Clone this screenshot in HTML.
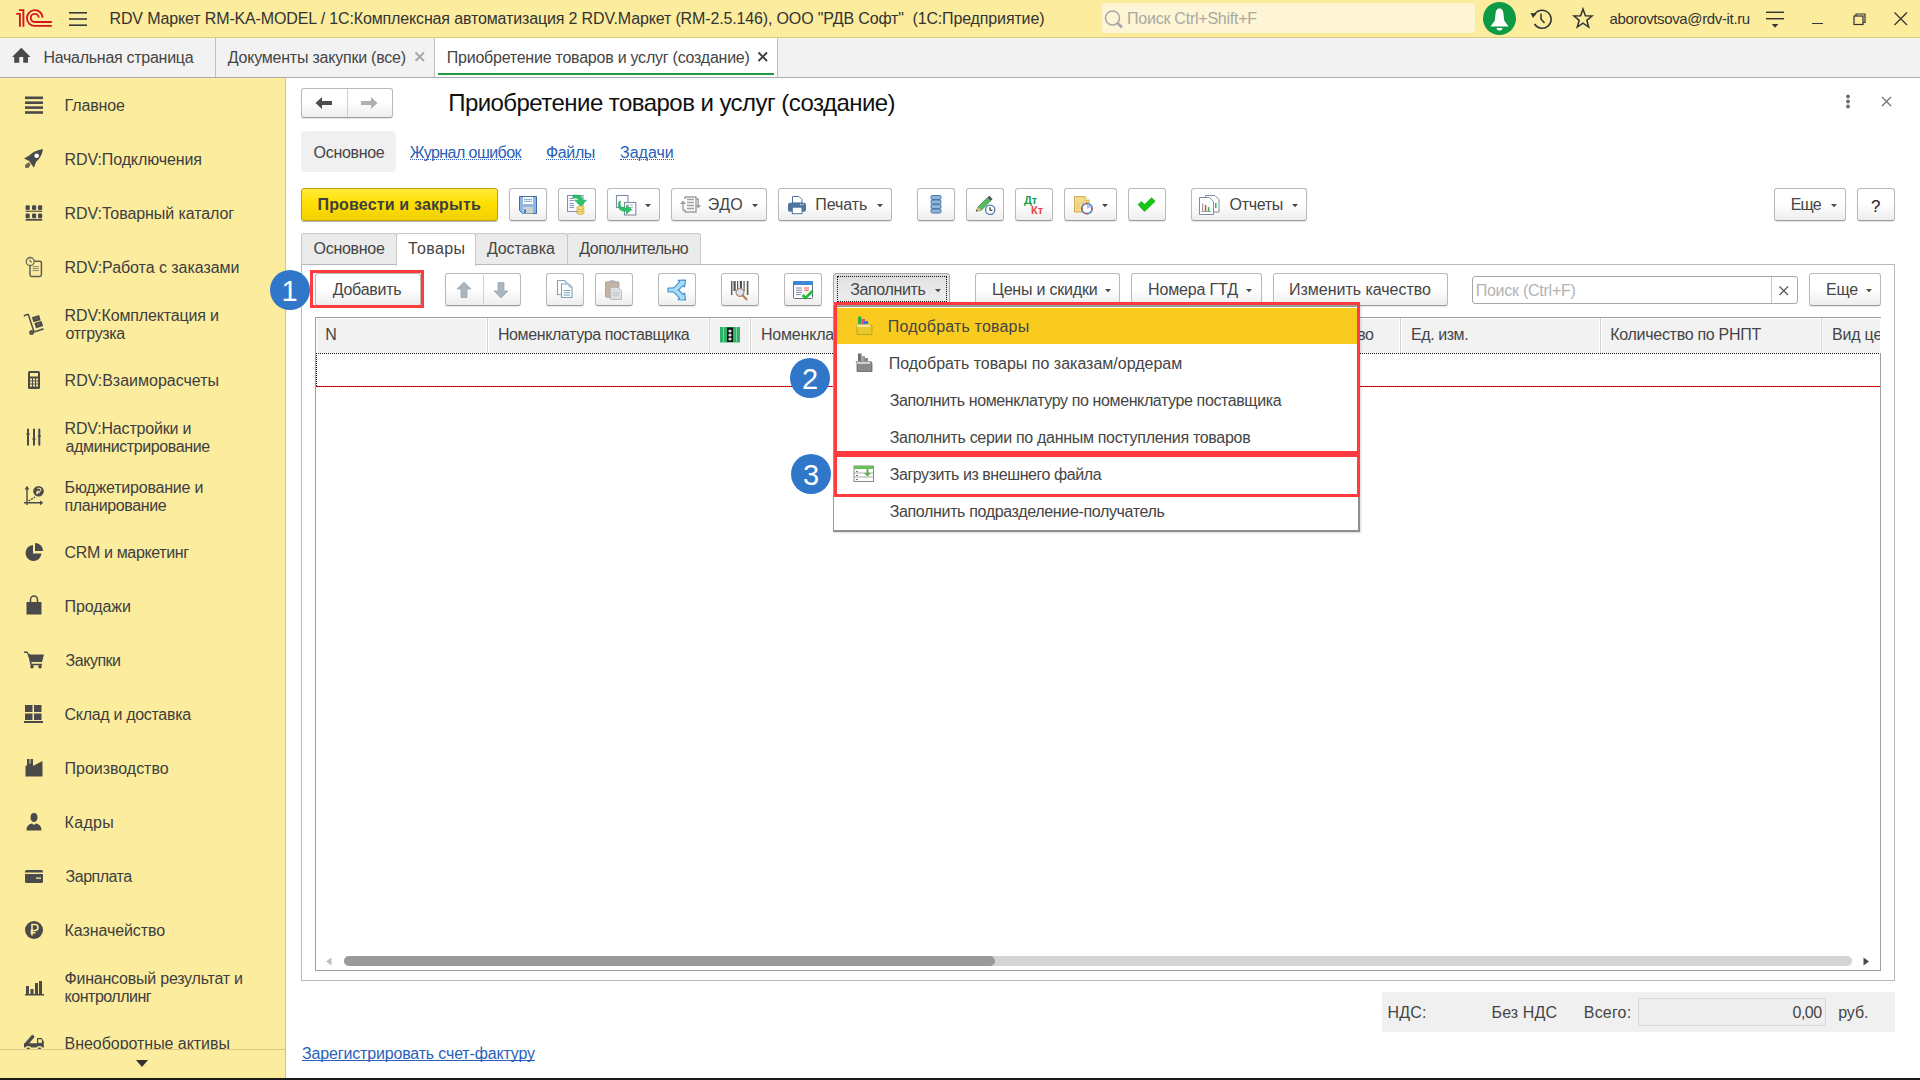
<!DOCTYPE html><html><head><meta charset="utf-8"><style>
*{box-sizing:border-box}
html,body{margin:0;padding:0}
body{width:1920px;height:1080px;overflow:hidden;position:relative;background:#fff;font-family:"Liberation Sans",sans-serif}
.a{position:absolute}
.t{position:absolute;white-space:nowrap;font-family:"Liberation Sans",sans-serif}
.btn{position:absolute;border:1px solid #B9B9B9;border-bottom-color:#9C9C9C;border-radius:3px;background:linear-gradient(#FFFFFF 0%,#FFFFFF 45%,#EEEEEE 100%);box-shadow:0 1px 1px rgba(0,0,0,0.10)}
</style></head><body>
<div class="a" style="left:0px;top:0px;width:1920px;height:37px;background:#FBEC9E"></div>
<div class="a" style="left:0px;top:37px;width:1920px;height:1px;background:#DDCB83"></div>
<svg class="a" style="left:0px;top:0px;" width="60" height="37" viewBox="0 0 60 37"><g fill="none" stroke="#D6141E" stroke-width="1.85" stroke-linecap="butt">
<path d="M16.2 13.9 H19.9 V26.7"/><path d="M19 10.1 H23.4 V26.7"/>
<path d="M42.7 17.6 A7.9 7.9 0 1 0 34.7 25.9 H51.8"/>
<path d="M38.8 17.6 A4.05 4.05 0 1 0 34.7 22 H51.8"/>
</g></svg>
<svg class="a" style="left:68px;top:11px;" width="20" height="16" viewBox="0 0 20 16"><g fill="#3A3A3A"><rect x="1" y="1" width="18" height="1.6"/><rect x="1" y="7.2" width="18" height="1.6"/><rect x="1" y="13.4" width="18" height="1.6"/></g></svg>
<div class="t" style="left:109.5px;top:11px;font-size:16px;line-height:16px;color:#333;letter-spacing:-0.143px;">RDV Маркет RM-KA-MODEL / 1С:Комплексная автоматизация 2 RDV.Маркет (RM-2.5.146), ООО "РДВ Софт"&nbsp; (1С:Предприятие)</div>
<div class="a" style="left:1102px;top:3px;width:373px;height:30px;background:#FDF5D3;border-radius:3px"></div>
<svg class="a" style="left:1102px;top:8px;" width="24" height="22" viewBox="0 0 24 22"><g fill="none" stroke="#A8A8A8" stroke-width="1.6"><circle cx="10.5" cy="10" r="7"/></g><path d="M15.5 15 L20 19.5" stroke="#A8A8A8" stroke-width="2.6"/></svg>
<div class="t" style="left:1127px;top:11px;font-size:16px;line-height:16px;color:#A9A9A3;letter-spacing:-0.235px;">Поиск Ctrl+Shift+F</div>
<svg class="a" style="left:1482px;top:2px;" width="35" height="34" viewBox="0 0 35 34"><circle cx="17.5" cy="16.5" r="16.5" fill="#0E9A45"/><path d="M17.5 6.5 C14.5 6.5 13.8 9 13.5 12 L12.8 18.5 L8.5 24.5 H26.5 L22.2 18.5 L21.5 12 C21.2 9 20.5 6.5 17.5 6.5 Z" fill="#fff"/><path d="M14.5 26 H20.5 C20 28 19 28.5 17.5 28.5 C16 28.5 15 28 14.5 26Z" fill="#fff"/></svg>
<svg class="a" style="left:1529px;top:7px;" width="24" height="24" viewBox="0 0 24 24"><g fill="none" stroke="#333" stroke-width="1.5"><path d="M5 8.5 A9 9 0 1 1 5.5 17"/><path d="M12 6.5 V12 L15.5 16"/></g><path d="M1.5 6 L7.5 6.5 L4 11 Z" fill="#333"/></svg>
<svg class="a" style="left:1571px;top:6px;" width="24" height="24" viewBox="0 0 24 24"><path d="M12 3 L14.4 9.8 L21 10 L15.8 14.3 L17.7 21 L12 17.1 L6.3 21 L8.2 14.3 L3 10 L9.6 9.8 Z" fill="none" stroke="#333" stroke-width="1.5" stroke-linejoin="miter"/></svg>
<div class="t" style="left:1609.6px;top:11px;font-size:15px;line-height:15px;color:#333;letter-spacing:-0.360px;">aborovtsova@rdv-it.ru</div>
<svg class="a" style="left:1764px;top:9px;" width="22" height="22" viewBox="0 0 22 22"><g fill="#333"><rect x="2" y="2.6" width="18" height="1.4"/><rect x="2" y="9" width="18" height="1.4"/><path d="M7.8 15 H14.3 L11 18.8 Z"/></g></svg>
<div class="a" style="left:1812px;top:23px;width:11px;height:1px;background:#333"></div>
<svg class="a" style="left:1852px;top:12px;" width="16" height="14" viewBox="0 0 16 14"><g fill="none" stroke="#333" stroke-width="1.2"><rect x="2" y="4" width="9" height="8.5"/><path d="M4 4 V2 H13 V10.5 H11"/></g></svg>
<svg class="a" style="left:1893px;top:11px;" width="16" height="16" viewBox="0 0 16 16"><path d="M1.5 1.5 L14 14 M14 1.5 L1.5 14" stroke="#333" stroke-width="1.3"/></svg>
<div class="a" style="left:0px;top:38px;width:1920px;height:39px;background:#F2F2F2"></div>
<div class="a" style="left:0px;top:77px;width:1920px;height:1px;background:#ABABAB"></div>
<div class="a" style="left:215px;top:38px;width:1px;height:39px;background:#BFBFBF"></div>
<div class="a" style="left:434px;top:38px;width:1px;height:39px;background:#BFBFBF"></div>
<div class="a" style="left:435px;top:38px;width:342px;height:39px;background:#FFFFFF"></div>
<div class="a" style="left:777px;top:38px;width:1px;height:39px;background:#BFBFBF"></div>
<div class="a" style="left:438px;top:73px;width:336px;height:2px;background:#1E9A44"></div>
<svg class="a" style="left:11px;top:47px;" width="22" height="20" viewBox="0 0 22 20"><path d="M10.3 0.8 L19.5 9.9 H17 V15.8 H12.2 V10 H8.3 V15.8 H3.2 V9.9 H1 Z" fill="#4A4A4A"/></svg>
<div class="t" style="left:43.5px;top:50px;font-size:16px;line-height:16px;color:#454545;letter-spacing:-0.279px;">Начальная страница</div>
<div class="t" style="left:227.8px;top:50px;font-size:16px;line-height:16px;color:#454545;letter-spacing:-0.227px;">Документы закупки (все)</div>
<svg class="a" style="left:413px;top:50px;" width="14" height="14" viewBox="0 0 14 14"><path d="M2.5 2.5 L11 11 M11 2.5 L2.5 11" stroke="#A6A6A6" stroke-width="1.8"/></svg>
<div class="t" style="left:446.8px;top:50px;font-size:16px;line-height:16px;color:#454545;letter-spacing:-0.238px;">Приобретение товаров и услуг (создание)</div>
<svg class="a" style="left:756px;top:50px;" width="14" height="14" viewBox="0 0 14 14"><path d="M2.5 2.5 L11 11 M11 2.5 L2.5 11" stroke="#3A3A3A" stroke-width="1.8"/></svg>
<div class="a" style="left:0px;top:78px;width:285px;height:1000px;background:#FBEC9E"></div>
<div class="a" style="left:285px;top:78px;width:1px;height:1000px;background:#D5C27E"></div>
<div class="t" style="left:64.6px;top:98px;font-size:16px;line-height:16px;color:#3E3E3E;letter-spacing:-0.133px;">Главное</div>
<div class="t" style="left:64.6px;top:152px;font-size:16px;line-height:16px;color:#3E3E3E;letter-spacing:-0.107px;">RDV:Подключения</div>
<div class="t" style="left:64.6px;top:206px;font-size:16px;line-height:16px;color:#3E3E3E;letter-spacing:-0.079px;">RDV:Товарный каталог</div>
<div class="t" style="left:64.6px;top:260px;font-size:16px;line-height:16px;color:#3E3E3E;letter-spacing:-0.045px;">RDV:Работа с заказами</div>
<div class="t" style="left:64.6px;top:308px;font-size:16px;line-height:16px;color:#3E3E3E;letter-spacing:-0.159px;">RDV:Комплектация и</div>
<div class="t" style="left:65.6px;top:326px;font-size:16px;line-height:16px;color:#3E3E3E;letter-spacing:-0.343px;">отгрузка</div>
<div class="t" style="left:64.6px;top:373px;font-size:16px;line-height:16px;color:#3E3E3E;letter-spacing:-0.006px;">RDV:Взаиморасчеты</div>
<div class="t" style="left:64.6px;top:421px;font-size:16px;line-height:16px;color:#3E3E3E;letter-spacing:-0.186px;">RDV:Настройки и</div>
<div class="t" style="left:65.6px;top:439px;font-size:16px;line-height:16px;color:#3E3E3E;letter-spacing:-0.394px;">администрирование</div>
<div class="t" style="left:64.6px;top:480px;font-size:16px;line-height:16px;color:#3E3E3E;letter-spacing:-0.200px;">Бюджетирование и</div>
<div class="t" style="left:64.6px;top:498px;font-size:16px;line-height:16px;color:#3E3E3E;letter-spacing:-0.391px;">планирование</div>
<div class="t" style="left:64.6px;top:545px;font-size:16px;line-height:16px;color:#3E3E3E;letter-spacing:-0.357px;">CRM и маркетинг</div>
<div class="t" style="left:64.6px;top:599px;font-size:16px;line-height:16px;color:#3E3E3E;letter-spacing:-0.100px;">Продажи</div>
<div class="t" style="left:65.6px;top:653px;font-size:16px;line-height:16px;color:#3E3E3E;letter-spacing:-0.483px;">Закупки</div>
<div class="t" style="left:64.6px;top:707px;font-size:16px;line-height:16px;color:#3E3E3E;letter-spacing:-0.313px;">Склад и доставка</div>
<div class="t" style="left:64.6px;top:761px;font-size:16px;line-height:16px;color:#3E3E3E;letter-spacing:-0.027px;">Производство</div>
<div class="t" style="left:64.6px;top:815px;font-size:16px;line-height:16px;color:#3E3E3E;letter-spacing:0.300px;">Кадры</div>
<div class="t" style="left:65.6px;top:869px;font-size:16px;line-height:16px;color:#3E3E3E;letter-spacing:-0.500px;">Зарплата</div>
<div class="t" style="left:64.6px;top:923px;font-size:16px;line-height:16px;color:#3E3E3E;letter-spacing:-0.091px;">Казначейство</div>
<div class="t" style="left:64.6px;top:971px;font-size:16px;line-height:16px;color:#3E3E3E;letter-spacing:-0.229px;">Финансовый результат и</div>
<div class="t" style="left:64.6px;top:989px;font-size:16px;line-height:16px;color:#3E3E3E;letter-spacing:-0.490px;">контроллинг</div>
<div class="a" style="left:0;top:1020px;width:285px;height:29px;overflow:hidden">
<div class="t" style="left:64.6px;top:16px;font-size:16px;line-height:16px;color:#3E3E3E;letter-spacing:-0.044px;">Внеоборотные активы</div>
</div>
<div class="a" style="left:0px;top:1049px;width:285px;height:1px;background:#D9C886"></div>
<svg class="a" style="left:134px;top:1058px;" width="16" height="11" viewBox="0 0 16 11"><path d="M2 2 H14 L8 9 Z" fill="#333"/></svg>
<div class="a" style="left:0px;top:1078px;width:1920px;height:2px;background:#1A1A1A"></div>
<svg class="a" style="left:24px;top:95px;" width="20" height="20" viewBox="0 0 20 20"><g fill="#4A4A4A"><rect x="1" y="1.5" width="18" height="2.6"/><rect x="1" y="6.4" width="18" height="2.6"/><rect x="1" y="11.3" width="18" height="2.6"/><rect x="1" y="16.2" width="18" height="2.6"/></g></svg>
<svg class="a" style="left:20px;top:145px;" width="26" height="26" viewBox="0 0 26 26"><path d="M22.9 4 C17.5 4.8 12.5 7.2 9.6 10.2 L4 13.4 L9.2 16 L13.9 22.7 L16 17 C19.5 14 22.4 9.5 22.9 4 Z" fill="#4A4A4A"/><circle cx="16.7" cy="10.7" r="2.3" fill="#fff"/><path d="M8.8 17.3 L5 20 L5.4 23.2 L8.7 22.8 L10.7 19.2 Z" fill="#6A6855"/></svg>
<svg class="a" style="left:25px;top:204px;" width="18" height="18" viewBox="0 0 18 18"><g fill="#4A4A4A"><rect x="0.6" y="1.3" width="4.2" height="4.6" rx="1.2"/><rect x="7" y="1.3" width="4.2" height="4.6" rx="1.2"/><rect x="13" y="1.3" width="4.2" height="4.6" rx="1.2"/><rect x="0.6" y="6.6" width="16.6" height="1.4" fill="#6A6855"/><rect x="0.6" y="9.6" width="4.2" height="4.6" rx="1.2"/><rect x="7" y="9.6" width="4.2" height="4.6" rx="1.2"/><rect x="13" y="9.6" width="4.2" height="4.6" rx="1.2"/><rect x="0.6" y="14.9" width="16.6" height="1.8"/></g></svg>
<svg class="a" style="left:25px;top:256px;" width="18" height="22" viewBox="0 0 18 22"><rect x="5" y="5.2" width="11.4" height="15.2" rx="1.6" fill="none" stroke="#5E5C50" stroke-width="1.5"/><path d="M7.6 10.6 H13.8 M7.6 12.6 H13.8 M7.6 14.6 H13.8" stroke="#8A8770" stroke-width="1"/><circle cx="5.2" cy="5.5" r="4" fill="#FBEC9E" stroke="#6A6855" stroke-width="1.3"/><path d="M5 3.3 V5.8 H7" fill="none" stroke="#6A6855" stroke-width="1"/></svg>
<svg class="a" style="left:22px;top:312px;" width="24" height="24" viewBox="0 0 24 24"><path d="M2.2 4.5 C2.5 2.8 3.5 2.3 6.3 2.4 L12 19.8" fill="none" stroke="#4F4E48" stroke-width="1.5"/><circle cx="9.6" cy="20.4" r="2.5" fill="#5A5950"/><path d="M12 20 L21.5 16.8" stroke="#5A5950" stroke-width="1.8"/><g transform="rotate(-17 15 10)"><rect x="11.5" y="4" width="7.5" height="5.3" fill="#4A4A48"/><rect x="12.2" y="10.3" width="7.5" height="5.3" fill="#4A4A48"/><path d="M13.5 6.8 Q15 5.8 16.5 6.8 M14.2 13 Q15.7 12 17.2 13" stroke="#8A8770" stroke-width=".8" fill="none"/></g></svg>
<svg class="a" style="left:27px;top:370px;" width="14" height="20" viewBox="0 0 14 20"><rect x="1" y="1" width="12" height="18" rx="1.5" fill="#4A4A4A"/><rect x="3" y="3" width="8" height="3.5" fill="#FBEC9E"/><g fill="#FBEC9E"><rect x="3" y="8.5" width="2" height="2"/><rect x="6" y="8.5" width="2" height="2"/><rect x="9" y="8.5" width="2" height="2"/><rect x="3" y="11.5" width="2" height="2"/><rect x="6" y="11.5" width="2" height="2"/><rect x="9" y="11.5" width="2" height="2"/><rect x="3" y="14.5" width="2" height="2"/><rect x="6" y="14.5" width="2" height="2"/><rect x="9" y="14.5" width="2" height="2"/></g></svg>
<svg class="a" style="left:26px;top:428px;" width="17" height="19" viewBox="0 0 17 19"><g stroke="#4A4A4A" stroke-width="2" stroke-linecap="round" fill="none"><path d="M2 1.5 V4.3 M2 7.8 V16.8 M8 1.5 V9.3 M8 12.8 V16.8 M13.3 1.5 V6.3 M13.3 9.8 V16.8"/></g><g fill="#4A4A4A"><circle cx="2" cy="6" r="1.6"/><circle cx="8" cy="11" r="1.6"/><circle cx="13.3" cy="8" r="1.6"/></g></svg>
<svg class="a" style="left:23px;top:484px;" width="22" height="23" viewBox="0 0 22 23"><g fill="none" stroke="#4A4A4A" stroke-width="1.4"><path d="M4 3.5 V21 M1 18.8 H17.5"/><path d="M5.5 17 L12 13.2" stroke-dasharray="2 1"/></g><path d="M1.6 5.5 L4 1.8 L6.4 5.5Z M17 16.4 L20.3 18.8 L17 21.2Z" fill="#4A4A4A"/><circle cx="15.5" cy="7.2" r="5.3" fill="#4A4A4A"/><path d="M14.2 4.3 H16.4 A1.5 1.5 0 0 1 16.4 7.3 H14.2 V10.5 M13 8.8 H17" stroke="#FBEC9E" stroke-width="1.1" fill="none"/></svg>
<svg class="a" style="left:24px;top:542px;" width="20" height="20" viewBox="0 0 20 20"><path d="M9 3 A8 8 0 1 0 17.5 11.5 H9 Z" fill="#4A4A4A"/><path d="M11 1 A8 8 0 0 1 19 9 H11 Z" fill="#4A4A4A"/></svg>
<svg class="a" style="left:25px;top:595px;" width="18" height="21" viewBox="0 0 18 21"><path d="M1.5 7 H16.5 V19.5 H1.5 Z" fill="#4A4A4A"/><path d="M5.5 8 V4.5 A3.5 3.5 0 0 1 12.5 4.5 V8" fill="none" stroke="#4A4A4A" stroke-width="1.5"/></svg>
<svg class="a" style="left:23px;top:650px;" width="22" height="20" viewBox="0 0 22 20"><path d="M1 1.5 H4.5 L6 4.5 H21 L19 12 H7.5 L4 3 H1Z" fill="#4A4A4A"/><path d="M6 4 L8 14.5 H19" fill="none" stroke="#4A4A4A" stroke-width="1.5"/><circle cx="9" cy="16.8" r="1.8" fill="#4A4A4A"/><circle cx="17" cy="16.8" r="1.8" fill="#4A4A4A"/></svg>
<svg class="a" style="left:23px;top:704px;" width="21" height="20" viewBox="0 0 21 20"><g fill="#4A4A4A"><rect x="2" y="1" width="7.5" height="7"/><rect x="11" y="1" width="7.5" height="7"/><rect x="2" y="9.5" width="7.5" height="6.5"/><rect x="11" y="9.5" width="7.5" height="6.5"/><rect x="1" y="17" width="19" height="2"/></g></svg>
<svg class="a" style="left:24px;top:758px;" width="20" height="20" viewBox="0 0 20 20"><path d="M1.5 8 L9 4 V8 L18.5 3 V18.5 H1.5 Z" fill="#4A4A4A"/><rect x="3" y="1" width="2.5" height="6" fill="#4A4A4A"/><rect x="6.5" y="1" width="2.5" height="4.5" fill="#4A4A4A"/></svg>
<svg class="a" style="left:25px;top:812px;" width="18" height="20" viewBox="0 0 18 20"><path d="M9 1 C6.5 1 5.5 3 5.5 5.5 C5.5 8 7 10 9 10 C11 10 12.5 8 12.5 5.5 C12.5 3 11.5 1 9 1Z" fill="#4A4A4A"/><path d="M1.5 18.5 C1.5 14 4 12 7 11.5 L9 13 L11 11.5 C14 12 16.5 14 16.5 18.5 Z" fill="#4A4A4A"/></svg>
<svg class="a" style="left:24px;top:869px;" width="20" height="15" viewBox="0 0 20 15"><rect x="1" y="1" width="18" height="13" rx="1.5" fill="#4A4A4A"/><rect x="1" y="3.5" width="18" height="1.5" fill="#FBEC9E"/><rect x="12" y="8.5" width="5" height="1.3" fill="#FBEC9E"/></svg>
<svg class="a" style="left:24px;top:920px;" width="20" height="20" viewBox="0 0 20 20"><circle cx="10" cy="10" r="9" fill="#4A4A4A"/><path d="M8 15.5 V4.5 H11 A3 3 0 0 1 11 10.5 H6.5 M6.5 12.8 H11.5" fill="none" stroke="#FBEC9E" stroke-width="1.6"/></svg>
<svg class="a" style="left:24px;top:980px;" width="20" height="16" viewBox="0 0 20 16"><g fill="#4A4A4A"><rect x="2" y="6" width="3" height="8"/><rect x="6.5" y="9" width="3" height="5"/><rect x="11" y="3" width="3" height="11"/><rect x="15" y="1" width="3" height="13"/><rect x="1" y="14" width="19" height="1.5"/></g></svg>
<div class="a" style="left:22px;top:1033px;width:24px;height:16px;overflow:hidden">
<svg class="a" style="left:0px;top:0px;" width="24" height="20" viewBox="0 0 24 20"><path d="M2.3 11 L10.2 1.6 L12.8 3.8 L5.5 12.2 Z" fill="#4A4A4A"/><path d="M3.2 9.3 L9.8 2.6" stroke="#8A8770" stroke-width=".7" stroke-dasharray="1 1"/><path d="M2 10.3 H15 V5.6 Q15 5 15.6 5 H19.8 L21.8 8.5 V14.5 H2 Z" fill="#4A4A4A"/><rect x="16.2" y="6.3" width="3.6" height="3.6" fill="#FBEC9E"/><circle cx="6.3" cy="16.3" r="3.2" fill="#FBEC9E"/><circle cx="17.5" cy="16.3" r="3.2" fill="#FBEC9E"/><circle cx="6.3" cy="16.3" r="1.7" fill="#4A4A4A"/><circle cx="17.5" cy="16.3" r="1.7" fill="#4A4A4A"/></svg>
</div>
<div class="btn" style="left:301px;top:88px;width:92px;height:30px;"></div>
<div class="a" style="left:347px;top:89px;width:1px;height:28px;background:#CFCFCF"></div>
<svg class="a" style="left:314px;top:95px;" width="20" height="16" viewBox="0 0 20 16"><path d="M1.5 8 L8 2 V6 H18 V10 H8 V14 Z" fill="#4D4D4D"/></svg>
<svg class="a" style="left:359px;top:95px;" width="20" height="16" viewBox="0 0 20 16"><path d="M18.5 8 L12 2 V6 H2 V10 H12 V14 Z" fill="#AFAFAF"/></svg>
<div class="t" style="left:448.2px;top:91px;font-size:24px;line-height:24px;color:#111111;letter-spacing:-0.547px;">Приобретение товаров и услуг (создание)</div>
<svg class="a" style="left:1843px;top:94px;" width="10" height="16" viewBox="0 0 10 16"><g fill="#6E6E6E"><circle cx="5" cy="2.5" r="1.9"/><circle cx="5" cy="7.5" r="1.9"/><circle cx="5" cy="12.5" r="1.9"/></g></svg>
<svg class="a" style="left:1880px;top:95px;" width="13" height="13" viewBox="0 0 13 13"><path d="M2 2 L11 11 M11 2 L2 11" stroke="#6E6E6E" stroke-width="1.2"/></svg>
<div class="a" style="left:301px;top:131px;width:95px;height:41px;background:#F0F0F0;border-radius:4px"></div>
<div class="t" style="left:313.6px;top:145px;font-size:16px;line-height:16px;color:#454545;letter-spacing:-0.314px;">Основное</div>
<div class="t" style="left:409.7px;top:145px;font-size:16px;line-height:16px;color:#2B5FB8;letter-spacing:-0.558px;border-bottom:1px dotted #2B5FB8;height:15px">Журнал ошибок</div>
<div class="t" style="left:546px;top:145px;font-size:16px;line-height:16px;color:#2B5FB8;letter-spacing:-0.375px;border-bottom:1px dotted #2B5FB8;height:15px">Файлы</div>
<div class="t" style="left:620px;top:145px;font-size:16px;line-height:16px;color:#2B5FB8;letter-spacing:0.000px;border-bottom:1px dotted #2B5FB8;height:15px">Задачи</div>
<div class="a" style="left:301px;top:188px;width:197px;height:33px;border:1px solid #C2A000;border-radius:3px;background:linear-gradient(#FFEB3B 0%,#FFE000 45%,#F1D000 100%);box-shadow:0 1px 1px rgba(0,0,0,0.3)"></div>
<div class="t" style="left:317.5px;top:197px;font-size:16px;line-height:16px;color:#3F3F3F;font-weight:bold;letter-spacing:0.165px;">Провести и закрыть</div>
<div class="btn" style="left:509px;top:188px;width:38px;height:33px;"></div>
<div class="btn" style="left:558px;top:188px;width:38px;height:33px;"></div>
<div class="btn" style="left:607px;top:188px;width:53px;height:33px;"></div>
<div class="btn" style="left:671px;top:188px;width:96px;height:33px;"></div>
<div class="btn" style="left:778px;top:188px;width:114px;height:33px;"></div>
<div class="btn" style="left:917px;top:188px;width:38px;height:33px;"></div>
<div class="btn" style="left:966px;top:188px;width:38px;height:33px;"></div>
<div class="btn" style="left:1015px;top:188px;width:38px;height:33px;"></div>
<div class="btn" style="left:1064px;top:188px;width:53px;height:33px;"></div>
<div class="btn" style="left:1128px;top:188px;width:38px;height:33px;"></div>
<div class="btn" style="left:1191px;top:188px;width:116px;height:33px;"></div>
<div class="btn" style="left:1774px;top:188px;width:72px;height:33px;"></div>
<div class="btn" style="left:1857px;top:188px;width:38px;height:33px;"></div>
<svg class="a" style="left:645px;top:204px;" width="7" height="4" viewBox="0 0 7 4"><path d="M0 0 H6 L3 3.2 Z" fill="#4A4A4A"/></svg>
<svg class="a" style="left:752px;top:204px;" width="7" height="4" viewBox="0 0 7 4"><path d="M0 0 H6 L3 3.2 Z" fill="#4A4A4A"/></svg>
<svg class="a" style="left:877px;top:204px;" width="7" height="4" viewBox="0 0 7 4"><path d="M0 0 H6 L3 3.2 Z" fill="#4A4A4A"/></svg>
<svg class="a" style="left:1102px;top:204px;" width="7" height="4" viewBox="0 0 7 4"><path d="M0 0 H6 L3 3.2 Z" fill="#4A4A4A"/></svg>
<svg class="a" style="left:1292px;top:204px;" width="7" height="4" viewBox="0 0 7 4"><path d="M0 0 H6 L3 3.2 Z" fill="#4A4A4A"/></svg>
<svg class="a" style="left:1831px;top:204px;" width="7" height="4" viewBox="0 0 7 4"><path d="M0 0 H6 L3 3.2 Z" fill="#4A4A4A"/></svg>
<div class="t" style="left:707.8px;top:197px;font-size:16px;line-height:16px;color:#454545;letter-spacing:0.375px;">ЭДО</div>
<div class="t" style="left:815.2px;top:197px;font-size:16px;line-height:16px;color:#454545;letter-spacing:-0.050px;">Печать</div>
<div class="t" style="left:1229.5px;top:197px;font-size:16px;line-height:16px;color:#454545;letter-spacing:-0.300px;">Отчеты</div>
<div class="t" style="left:1790.7px;top:197px;font-size:16px;line-height:16px;color:#454545;letter-spacing:-0.850px;">Еще</div>
<div class="t" style="left:1871px;top:198px;font-size:17px;line-height:17px;color:#222;letter-spacing:0.700px;">?</div>
<svg class="a" style="left:519px;top:196px;" width="18" height="18" viewBox="0 0 18 18"><path d="M0.5 0.5 H17.5 V17.5 H3.5 L0.5 14.5 Z" fill="#8FB6E3" stroke="#3B6FA8" stroke-width="1"/><rect x="4" y="1" width="10" height="7" fill="#fff"/><path d="M5 3.3 H13 M5 5.3 H13" stroke="#7FA3CC" stroke-width="1"/><rect x="4" y="11" width="10" height="6.5" fill="#CDD2CE"/><rect x="5" y="13.5" width="2" height="3.5" fill="#3B78C0"/></svg>
<svg class="a" style="left:566px;top:194px;" width="22" height="22" viewBox="0 0 22 22"><rect x="1.5" y="1.5" width="15.5" height="16" fill="#F6F8FB" stroke="#8090A8" stroke-width="1"/><path d="M3.5 4.5 H7 M3.5 6.5 H8 M3.5 9.5 H7.5 M3.5 11.5 H8 M3.5 13.5 H8" stroke="#6F8FBF" stroke-width=".9"/><path d="M7 1.2 C12.5 0.5 16.5 2 16.3 6.2 L20.5 6.2 L14.6 12.2 L8.8 6.2 L12.6 6.2 C12.6 4.6 11 3.6 7 4.2 Z" fill="#27C46A" stroke="#1E9E50" stroke-width=".6"/><g fill="#F3DE7A" stroke="#C9A93A" stroke-width=".7"><ellipse cx="14.5" cy="18.8" rx="3.8" ry="1.7"/><ellipse cx="14.5" cy="16.3" rx="3.8" ry="1.7"/><ellipse cx="14.5" cy="13.8" rx="3.8" ry="1.7"/></g></svg>
<svg class="a" style="left:615px;top:194px;" width="24" height="22" viewBox="0 0 24 22"><rect x="1.5" y="1.5" width="11.5" height="12" fill="#fff" stroke="#7E8DA3" stroke-width="1.1"/><rect x="9.5" y="8.5" width="11.3" height="12.5" fill="#fff" stroke="#7E8DA3" stroke-width="1.1"/><path d="M12 11 H18 M12 13.5 H18 M12 16 H18" stroke="#9AAABB" stroke-width=".8"/><path d="M5.5 7 C4.5 10 5.5 14 9 14 L11.5 14 L11.5 11 L16.5 15.5 L11.5 20 L11.5 17 L8.5 17 C3.5 17 2.5 11 4 7.5 Z" fill="#27C46A" stroke="#1E9E50" stroke-width=".6"/></svg>
<svg class="a" style="left:679px;top:195px;" width="23" height="20" viewBox="0 0 23 20"><g fill="none" stroke="#9E9E9E" stroke-width="1.4"><path d="M6 4 V2 H17 V17 H6 V15"/><path d="M8 4.5 H15 M8 7.5 H15 M8 10.5 H15 M8 13.5 H15"/></g><path d="M1 9 L4 5.5 L7 9 Z M16.5 10 L22 10 L19.2 13.5 Z" fill="#9E9E9E"/><path d="M4 9 V15 H6 M19.2 10 V4 H17" fill="none" stroke="#9E9E9E" stroke-width="1.4"/></svg>
<svg class="a" style="left:786px;top:195px;" width="22" height="20" viewBox="0 0 22 20"><path d="M6.5 1.5 H13 L16 4.5 V8 H6.5 Z" fill="#fff" stroke="#4F74A0" stroke-width="1"/><rect x="2" y="7.8" width="18" height="9" rx="2" fill="#4F74A0"/><circle cx="14.5" cy="9.6" r=".7" fill="#fff"/><circle cx="17" cy="9.6" r=".7" fill="#fff"/><rect x="6.3" y="12.2" width="9.7" height="6.5" fill="#fff" stroke="#4F74A0" stroke-width="1"/></svg>
<svg class="a" style="left:926px;top:194px;" width="20" height="22" viewBox="0 0 20 22"><g fill="#8FB3D9" stroke="#4A76A8" stroke-width="1"><rect x="5" y="1.5" width="10" height="4" rx="1.2"/><rect x="5" y="6" width="10" height="4" rx="1.2"/><rect x="5" y="10.5" width="10" height="4" rx="1.2"/><rect x="5" y="15" width="10" height="4" rx="1.2"/></g></svg>
<svg class="a" style="left:974px;top:195px;" width="22" height="22" viewBox="0 0 22 22"><path d="M2 16.4 L4 12 L13.5 2.5 L16.8 5.8 L7.3 15.3 Z" fill="#55BB60" stroke="#3C7A44" stroke-width=".6"/><path d="M13.5 2.5 L15.3 0.7 L18.6 4 L16.8 5.8Z" fill="#4A5560"/><path d="M2 16.4 L4 12 L7.3 15.3Z" fill="#E8BE78"/><path d="M2 16.4 L2.8 14.6 L3.8 15.6Z" fill="#333"/><circle cx="16.2" cy="14.8" r="4.6" fill="#fff" stroke="#4A78A8" stroke-width="1.3"/><path d="M16 12.2 V15.2 H18.4" stroke="#222" stroke-width="1.1" fill="none"/></svg>
<div class="t" style="left:1024px;top:195px;font:bold 11px/11px 'Liberation Sans';color:#11A24A">Дт</div>
<div class="t" style="left:1031px;top:205px;font:bold 11px/11px 'Liberation Sans';color:#E84545">Кт</div>
<svg class="a" style="left:1073px;top:195px;" width="22" height="22" viewBox="0 0 22 22"><path d="M1.5 1.5 H12 L16 5.5 V17 H1.5 Z" fill="#F2DA8E" stroke="#D2AE52" stroke-width="1"/><path d="M12 1.5 V5.5 H16" fill="#FBEFC4" stroke="#D2AE52" stroke-width=".8"/><path d="M3.5 8 H6.5 M8 8 H11 M3.5 10.5 H6.5 M3.5 13 H9" stroke="#D9BE70" stroke-width=".9"/><circle cx="14" cy="13.6" r="5.2" fill="#fff" stroke="#4A78B8" stroke-width="1.5"/><path d="M14 13.6 L14 9.5 A4 4 0 0 1 17.8 12.5 Z" fill="#A9C4EA"/><g fill="#E8453C"><circle cx="14" cy="8.6" r="1"/><circle cx="14" cy="18.6" r="1"/><circle cx="9" cy="13.6" r="1"/><circle cx="19" cy="13.6" r="1"/></g></svg>
<svg class="a" style="left:1137px;top:197px;" width="20" height="16" viewBox="0 0 20 16"><path d="M1 7.6 L4.4 4.4 L7.5 7.5 L14.6 0.8 L18.2 4.3 L7.5 14.6 Z" fill="#12C812" stroke="#0E9A0E" stroke-width=".6"/></svg>
<svg class="a" style="left:1198px;top:194px;" width="24" height="22" viewBox="0 0 24 22"><path d="M7.5 1.5 H17 L21 5.5 V18 H7.5 Z" fill="#fff" stroke="#7E8DA3" stroke-width="1"/><path d="M1.5 3.5 H11.5 L15.5 7.5 V20.5 H1.5 Z" fill="#fff" stroke="#7E8DA3" stroke-width="1"/><rect x="4" y="9.5" width="1.2" height="8" fill="#999"/><rect x="6.8" y="11" width="1.5" height="6.5" fill="#E84040"/><rect x="9.8" y="13" width="1.5" height="4.5" fill="#2DB34A"/><rect x="17" y="9" width="1.5" height="5" fill="#2DB34A"/><path d="M3.5 17.5 H13" stroke="#888" stroke-width=".8"/></svg>
<div class="a" style="left:301px;top:233px;width:96px;height:32px;background:#EBEBEB;border:1px solid #C7C7C7;border-bottom:none;border-radius:3px 3px 0 0"></div>
<div class="a" style="left:475px;top:233px;width:93px;height:32px;background:#EBEBEB;border:1px solid #C7C7C7;border-bottom:none;border-radius:3px 3px 0 0"></div>
<div class="a" style="left:567px;top:233px;width:134px;height:32px;background:#EBEBEB;border:1px solid #C7C7C7;border-bottom:none;border-radius:3px 3px 0 0"></div>
<div class="a" style="left:301px;top:264px;width:1594px;height:717px;border:1px solid #B9B9B9"></div>
<div class="a" style="left:396px;top:233px;width:80px;height:33px;background:#fff;border:1px solid #C7C7C7;border-bottom:none;border-radius:3px 3px 0 0"></div>
<div class="t" style="left:313.6px;top:241px;font-size:16px;line-height:16px;color:#454545;letter-spacing:-0.300px;">Основное</div>
<div class="t" style="left:408.1px;top:241px;font-size:16px;line-height:16px;color:#454545;letter-spacing:0.360px;">Товары</div>
<div class="t" style="left:486.9px;top:241px;font-size:16px;line-height:16px;color:#454545;letter-spacing:-0.100px;">Доставка</div>
<div class="t" style="left:579.2px;top:241px;font-size:16px;line-height:16px;color:#454545;letter-spacing:-0.467px;">Дополнительно</div>
<div class="btn" style="left:315px;top:273px;width:106px;height:33px;"></div>
<div class="t" style="left:332.7px;top:282px;font-size:16px;line-height:16px;color:#454545;letter-spacing:-0.243px;">Добавить</div>
<div class="btn" style="left:445px;top:273px;width:76px;height:33px;"></div>
<div class="a" style="left:483px;top:275px;width:1px;height:29px;background:#D0D0D0"></div>
<svg class="a" style="left:456px;top:281px;" width="16" height="18" viewBox="0 0 16 18"><path d="M8 1 L15 8 H11 V16.5 H5 V8 H1 Z" fill="#A9B5BF" stroke="#95A2AC" stroke-width=".7" stroke-linejoin="round"/></svg>
<svg class="a" style="left:493px;top:281px;" width="16" height="18" viewBox="0 0 16 18"><path d="M8 17 L15 10 H11 V1.5 H5 V10 H1 Z" fill="#A9B5BF" stroke="#95A2AC" stroke-width=".7" stroke-linejoin="round"/></svg>
<div class="btn" style="left:546px;top:273px;width:38px;height:33px;"></div>
<div class="btn" style="left:595px;top:273px;width:38px;height:33px;"></div>
<div class="btn" style="left:658px;top:273px;width:38px;height:33px;"></div>
<div class="btn" style="left:721px;top:273px;width:38px;height:33px;"></div>
<div class="btn" style="left:784px;top:273px;width:38px;height:33px;"></div>
<svg class="a" style="left:554px;top:279px;" width="22" height="22" viewBox="0 0 22 22"><path d="M3.5 1.5 H10.5 L13 4 V15.5 H3.5 Z" fill="#fff" stroke="#7AA5C0" stroke-width="1.1"/><path d="M7.5 5 H15 L18 8 V18.5 H7.5 Z" fill="#fff" stroke="#7AA5C0" stroke-width="1.1"/><path d="M15 5 V8 H18" fill="#C5DBE8" stroke="#7AA5C0" stroke-width=".8"/><path d="M9.5 11.5 H16 M9.5 13.8 H16 M9.5 16.1 H16" stroke="#7AA5C0" stroke-width="1"/></svg>
<svg class="a" style="left:603px;top:279px;" width="22" height="22" viewBox="0 0 22 22"><rect x="2.5" y="2.8" width="13.5" height="15.5" rx="1" fill="#C2B3A3" stroke="#A89888" stroke-width=".8"/><rect x="6.5" y="1.2" width="5.5" height="3" rx="1" fill="#AEB4BA"/><path d="M7.5 8.5 H15.5 L18.5 11.5 V20.5 H7.5 Z" fill="#DDE0E3" stroke="#B3B8BD" stroke-width=".8"/><path d="M9.5 14 H16 M9.5 16.3 H16" stroke="#B8C2CA" stroke-width=".9"/></svg>
<svg class="a" style="left:666px;top:278px;" width="23" height="24" viewBox="0 0 23 24"><path d="M2 10 H6.5 C8 10 9.5 8.5 11 6.5 L13.5 3.8 L12.2 2.2 L19.5 2 L18.6 9 L17 7.5 L14.5 10.2 C13 11.8 12 12 12 12 C12 12 13 12.2 14.5 13.8 L17 16.5 L18.6 15 L19.5 22 L12.2 21.8 L13.5 20.2 L11 17.5 C9.5 15.5 8 14 6.5 14 H2 Z" fill="#A8DCF7" stroke="#3A8CD0" stroke-width="1.1" stroke-linejoin="round"/></svg>
<svg class="a" style="left:729px;top:279px;" width="22" height="22" viewBox="0 0 22 22"><g fill="#555"><rect x="2" y="2" width="1.4" height="14"/><rect x="4.5" y="2" width="2.2" height="10"/><rect x="8" y="2" width="1.2" height="8"/><rect x="10.8" y="2" width="2.2" height="8"/><rect x="14.5" y="2" width="1.2" height="10"/><rect x="17.8" y="2" width="1.6" height="14"/></g><circle cx="11" cy="13.5" r="3.9" fill="#D4E6F8" stroke="#B08A70" stroke-width="1.3"/><path d="M13.6 16.3 L17.5 20.3" stroke="#C07A50" stroke-width="2.2" stroke-linecap="round"/></svg>
<svg class="a" style="left:792px;top:279px;" width="23" height="22" viewBox="0 0 23 22"><rect x="1.5" y="2.5" width="19" height="17" rx="1" fill="#fff" stroke="#5E7088" stroke-width="1"/><rect x="1" y="2" width="20" height="4" rx="1" fill="#3D86D8"/><path d="M4 9 H10 M4 11.2 H10 M4 13.4 H10 M4 15.6 H9" stroke="#7A8898" stroke-width="1"/><path d="M12 9 H17 M12 11.2 H17" stroke="#E0503A" stroke-width="1"/><path d="M10.5 16 L13.5 19 L20.5 12" stroke="#1FBE2F" stroke-width="2.6" fill="none"/></svg>
<div class="a" style="left:833px;top:273px;width:117px;height:33px;border:1px solid #A8A8A8;border-radius:3px;background:linear-gradient(#D9D9D9 0%,#E6E6E6 30%,#EDEDED 100%)"></div>
<div class="a" style="left:837px;top:276px;width:110px;height:26px;border:1px dotted #111"></div>
<div class="t" style="left:850.2px;top:282px;font-size:16px;line-height:16px;color:#454545;letter-spacing:-0.363px;">Заполнить</div>
<svg class="a" style="left:935px;top:289px;" width="7" height="4" viewBox="0 0 7 4"><path d="M0 0 H6 L3 3.2 Z" fill="#4A4A4A"/></svg>
<div class="btn" style="left:975px;top:273px;width:145px;height:33px;"></div>
<div class="btn" style="left:1131px;top:273px;width:131px;height:33px;"></div>
<div class="btn" style="left:1273px;top:273px;width:175px;height:33px;"></div>
<div class="btn" style="left:1809px;top:273px;width:72px;height:33px;"></div>
<div class="t" style="left:992px;top:282px;font-size:16px;line-height:16px;color:#454545;letter-spacing:-0.200px;">Цены и скидки</div>
<svg class="a" style="left:1105px;top:289px;" width="7" height="4" viewBox="0 0 7 4"><path d="M0 0 H6 L3 3.2 Z" fill="#4A4A4A"/></svg>
<div class="t" style="left:1148px;top:282px;font-size:16px;line-height:16px;color:#454545;letter-spacing:-0.150px;">Номера ГТД</div>
<svg class="a" style="left:1246px;top:289px;" width="7" height="4" viewBox="0 0 7 4"><path d="M0 0 H6 L3 3.2 Z" fill="#4A4A4A"/></svg>
<div class="t" style="left:1289px;top:282px;font-size:16px;line-height:16px;color:#454545;letter-spacing:-0.019px;">Изменить качество</div>
<div class="t" style="left:1826px;top:282px;font-size:16px;line-height:16px;color:#454545;letter-spacing:-0.200px;">Еще</div>
<svg class="a" style="left:1866px;top:289px;" width="7" height="4" viewBox="0 0 7 4"><path d="M0 0 H6 L3 3.2 Z" fill="#4A4A4A"/></svg>
<div class="a" style="left:1472px;top:276px;width:326px;height:28px;border:1px solid #A6A6A6;border-radius:3px;background:#fff"></div>
<div class="a" style="left:1771px;top:277px;width:1px;height:26px;background:#C8C8C8"></div>
<div class="t" style="left:1475.7px;top:283px;font-size:16px;line-height:16px;color:#B3B3B3;letter-spacing:-0.254px;">Поиск (Ctrl+F)</div>
<svg class="a" style="left:1778px;top:285px;" width="12" height="12" viewBox="0 0 12 12"><path d="M1.5 1.5 L10 10 M10 1.5 L1.5 10" stroke="#555" stroke-width="1.2"/></svg>
<div class="a" style="left:315px;top:317px;width:1566px;height:654px;border:1px solid #A0A0A0"></div>
<div class="a" style="left:316px;top:318px;width:1564px;height:35px;background:#D2D2D2"></div>
<div class="a" style="left:316px;top:318px;width:171px;height:35px;background:#F2F2F2;border:1px solid #FFFFFF;border-bottom:none"></div>
<div class="a" style="left:488px;top:318px;width:221px;height:35px;background:#F2F2F2;border:1px solid #FFFFFF;border-bottom:none"></div>
<div class="a" style="left:710px;top:318px;width:40px;height:35px;background:#F2F2F2;border:1px solid #FFFFFF;border-bottom:none"></div>
<div class="a" style="left:751px;top:318px;width:649px;height:35px;background:#F2F2F2;border:1px solid #FFFFFF;border-bottom:none"></div>
<div class="a" style="left:1401px;top:318px;width:199px;height:35px;background:#F2F2F2;border:1px solid #FFFFFF;border-bottom:none"></div>
<div class="a" style="left:1601px;top:318px;width:220px;height:35px;background:#F2F2F2;border:1px solid #FFFFFF;border-bottom:none"></div>
<div class="a" style="left:1822px;top:318px;width:59px;height:35px;background:#F2F2F2;border:1px solid #FFFFFF;border-bottom:none"></div>
<svg class="a" style="left:720px;top:327px;" width="21" height="16" viewBox="0 0 21 16"><rect x="0" y="0" width="20" height="15.5" fill="#2FB36A"/><g fill="#7FD3A3"><rect x="3" y="0" width="1" height="15.5"/><rect x="16" y="0" width="1" height="15.5"/></g><rect x="7" y="0.5" width="6" height="14.5" fill="#111"/><g fill="#DDD"><circle cx="10" cy="4" r="1.6"/><circle cx="10" cy="8" r="1.6"/><circle cx="10" cy="12" r="1.6"/></g></svg>
<div class="t" style="left:325.2px;top:327px;font-size:16px;line-height:16px;color:#454545;letter-spacing:1.250px;">N</div>
<div class="t" style="left:497.9px;top:327px;font-size:16px;line-height:16px;color:#454545;letter-spacing:-0.382px;">Номенклатура поставщика</div>
<div class="t" style="left:761px;top:327px;font-size:16px;line-height:16px;color:#454545;letter-spacing:-0.200px;">Номенклатура</div>
<div class="t" style="left:1292px;top:327px;font-size:16px;line-height:16px;color:#454545;letter-spacing:-0.444px;">Количество</div>
<div class="t" style="left:1411px;top:327px;font-size:16px;line-height:16px;color:#454545;letter-spacing:-0.429px;">Ед. изм.</div>
<div class="t" style="left:1610.3px;top:327px;font-size:16px;line-height:16px;color:#454545;letter-spacing:-0.294px;">Количество по РНПТ</div>
<div class="a" style="left:1822px;top:318px;width:58px;height:35px;overflow:hidden">
<div class="t" style="left:10px;top:9px;font-size:16px;line-height:16px;color:#454545;letter-spacing:-0.200px;">Вид цены</div>
</div>
<div class="a" style="left:316px;top:353px;width:1564px;height:1px;background-image:linear-gradient(90deg,#111 50%,transparent 50%);background-size:2px 1px"></div>
<div class="a" style="left:316px;top:353px;width:1px;height:34px;background-image:linear-gradient(#111 50%,transparent 50%);background-size:1px 2px"></div>
<div class="a" style="left:316px;top:386px;width:1564px;height:1px;background-image:linear-gradient(90deg,#E02020 50%,#222 50%);background-size:2px 1px"></div>
<svg class="a" style="left:325px;top:957px;" width="8" height="9" viewBox="0 0 8 9"><path d="M6.5 0.5 V8.5 L1 4.5Z" fill="#BDBDBD"/></svg>
<div class="a" style="left:344px;top:956px;width:1508px;height:10px;background:#D4D4D4;border-radius:5px"></div>
<div class="a" style="left:344px;top:956px;width:651px;height:10px;background:#999999;border-radius:5px"></div>
<svg class="a" style="left:1862px;top:957px;" width="8" height="9" viewBox="0 0 8 9"><path d="M1.5 0.5 V8.5 L7 4.5Z" fill="#4A4A4A"/></svg>
<div class="a" style="left:1382px;top:992px;width:513px;height:40px;background:#F0F0F0"></div>
<div class="t" style="left:1387.5px;top:1005px;font-size:16px;line-height:16px;color:#454545;letter-spacing:0.167px;">НДС:</div>
<div class="t" style="left:1491.5px;top:1005px;font-size:16px;line-height:16px;color:#454545;letter-spacing:0.125px;">Без НДС</div>
<div class="t" style="left:1583.8px;top:1005px;font-size:16px;line-height:16px;color:#454545;letter-spacing:0.190px;">Всего:</div>
<div class="a" style="left:1638px;top:998px;width:188px;height:28px;border:1px solid #D8D8D8;border-radius:3px;background:#EFEFEF"></div>
<div class="t" style="left:1792.5px;top:1005px;font-size:16px;line-height:16px;color:#454545;letter-spacing:-0.500px;">0,00</div>
<div class="t" style="left:1838.2px;top:1005px;font-size:16px;line-height:16px;color:#454545;letter-spacing:-0.067px;">руб.</div>
<div class="t" style="left:302px;top:1046px;font-size:16px;line-height:16px;color:#2B5FB8;letter-spacing:-0.161px;text-decoration:underline;text-decoration-skip-ink:none">Зарегистрировать счет-фактуру</div>
<div class="a" style="left:833px;top:305px;width:527px;height:227px;background:#fff;border:1px solid #9A9A9A;border-top:2px solid #979D9D;border-right:2px solid #8E8E8E;border-bottom:2px solid #8E8E8E;box-shadow:1px 1px 2px rgba(0,0,0,0.15)"></div>
<div class="a" style="left:837px;top:308px;width:520px;height:36px;background:#F9CB1F"></div>
<div class="t" style="left:887.8px;top:319px;font-size:16px;line-height:16px;color:#454545;letter-spacing:0.180px;">Подобрать товары</div>
<div class="t" style="left:888.7px;top:356px;font-size:16px;line-height:16px;color:#454545;letter-spacing:0.000px;">Подобрать товары по заказам/ордерам</div>
<div class="t" style="left:889.7px;top:393px;font-size:16px;line-height:16px;color:#454545;letter-spacing:-0.390px;">Заполнить номенклатуру по номенклатуре поставщика</div>
<div class="t" style="left:889.7px;top:430px;font-size:16px;line-height:16px;color:#454545;letter-spacing:-0.305px;">Заполнить серии по данным поступления товаров</div>
<div class="t" style="left:889.7px;top:467px;font-size:16px;line-height:16px;color:#454545;letter-spacing:-0.431px;">Загрузить из внешнего файла</div>
<div class="t" style="left:889.7px;top:504px;font-size:16px;line-height:16px;color:#454545;letter-spacing:-0.348px;">Заполнить подразделение-получатель</div>
<svg class="a" style="left:854px;top:315px;" width="20" height="22" viewBox="0 0 20 22"><rect x="4" y="1.5" width="3.5" height="9" fill="#2BB24C"/><rect x="7.5" y="4" width="3.5" height="7" fill="#E8487A"/><rect x="10" y="6" width="4" height="5" fill="#3A6FE0"/><path d="M2 9.5 H17 L18 11.5 V19.5 H3 V11.5 Z" fill="#E8C830" stroke="#B09010" stroke-width=".7"/><path d="M2 9.5 H17 L15.5 12 H3.5Z" fill="#F5E6A0"/></svg>
<svg class="a" style="left:854px;top:352px;" width="20" height="22" viewBox="0 0 20 22"><rect x="4" y="1.5" width="3.5" height="9" fill="#707070"/><rect x="7.5" y="4" width="3.5" height="7" fill="#A0A0A0"/><rect x="10" y="6" width="4" height="5" fill="#888"/><path d="M2 9.5 H17 L18 11.5 V19.5 H3 V11.5 Z" fill="#8A8A8A" stroke="#555" stroke-width=".7"/><path d="M2 9.5 H17 L15.5 12 H3.5Z" fill="#D0D0D0"/></svg>
<svg class="a" style="left:853px;top:465px;" width="22" height="18" viewBox="0 0 22 18"><rect x="1" y="1" width="19.5" height="15.5" fill="#fff" stroke="#8A8A8A" stroke-width="1"/><rect x="1" y="1" width="19.5" height="3" fill="#6BBF59"/><g stroke="#AAA" stroke-width="1"><path d="M1 8 H20 M1 12 H20"/><path d="M3 6.5 H5 M3 10.5 H5 M3 14.5 H5" stroke="#777"/></g><path d="M13.5 4 V8 H11 L14.5 11.5 L18 8 H15.5 V4Z" fill="#5BB04A"/></svg>
<div class="a" style="left:834px;top:302px;width:526px;height:152px;border:3px solid #FF3B3F"></div>
<div class="a" style="left:834px;top:454px;width:526px;height:43px;border:3px solid #FF3B3F"></div>
<div class="a" style="left:310px;top:270px;width:114px;height:38px;border:3px solid #FF3B3F"></div>
<div class="a" style="left:269.5px;top:270px;width:40px;height:40px;border-radius:50%;background:#3077C9;color:#fff;font:29px/43px 'Liberation Sans';text-align:center">1</div>
<div class="a" style="left:790px;top:358px;width:40px;height:40px;border-radius:50%;background:#3077C9;color:#fff;font:29px/43px 'Liberation Sans';text-align:center">2</div>
<div class="a" style="left:791px;top:454px;width:40px;height:40px;border-radius:50%;background:#3077C9;color:#fff;font:29px/43px 'Liberation Sans';text-align:center">3</div>
</body></html>
